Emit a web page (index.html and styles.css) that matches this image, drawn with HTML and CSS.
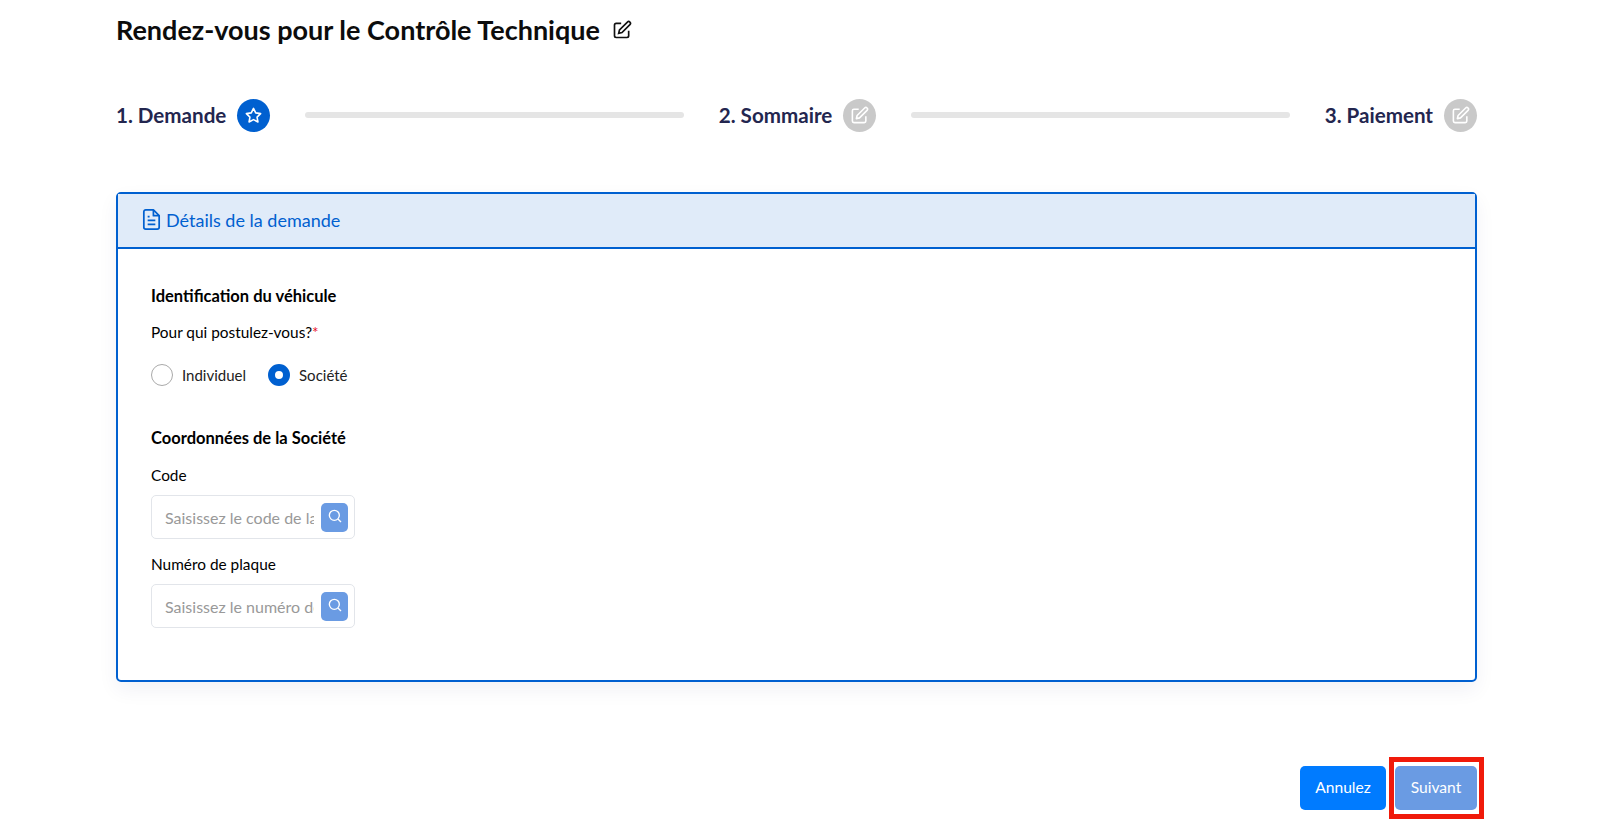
FILE: index.html
```html
<!DOCTYPE html>
<html lang="fr">
<head>
<meta charset="utf-8"/>
<title>Rendez-vous pour le Contrôle Technique</title>
<link rel="stylesheet" href="styles.css">
</head>
<body>
<div class="page">
    <div class="title">
        <h1>Rendez-vous pour le Contrôle Technique</h1>
        <svg class="title-icon" viewBox="0 0 24 24"><path d="M11 4H5a2 2 0 0 0-2 2v13a2 2 0 0 0 2 2h13a2 2 0 0 0 2-2v-6"/><path d="M18.5 2.5a2.1 2.1 0 0 1 3 3L12 15l-4 1 1-4z"/></svg>
    </div>

    <div class="steps">
        <div class="step">
            <span class="step-name">1. Demande</span>
            <span class="step-dot active"><svg viewBox="0 0 24 24"><path d="M12 3l2.8 5.7 6.2.9-4.5 4.4 1.1 6.2-5.6-3-5.6 3 1.1-6.2L3 9.6l6.2-.9z"/></svg></span>
        </div>
        <div class="step-bar"></div>
        <div class="step">
            <span class="step-name">2. Sommaire</span>
            <span class="step-dot"><svg viewBox="0 0 24 24"><path d="M11 4H5a2 2 0 0 0-2 2v13a2 2 0 0 0 2 2h13a2 2 0 0 0 2-2v-6"/><path d="M18.5 2.5a2.1 2.1 0 0 1 3 3L12 15l-4 1 1-4z"/></svg></span>
        </div>
        <div class="step-bar"></div>
        <div class="step">
            <span class="step-name">3. Paiement</span>
            <span class="step-dot"><svg viewBox="0 0 24 24"><path d="M11 4H5a2 2 0 0 0-2 2v13a2 2 0 0 0 2 2h13a2 2 0 0 0 2-2v-6"/><path d="M18.5 2.5a2.1 2.1 0 0 1 3 3L12 15l-4 1 1-4z"/></svg></span>
        </div>
    </div>

    <div class="card">
        <div class="card-head">
            <svg viewBox="0 0 24 24"><path d="M14 2H6a2 2 0 0 0-2 2v16a2 2 0 0 0 2 2h12a2 2 0 0 0 2-2V8z"/><path d="M14 2v6h6"/><path d="M8 13h8M8 17h8M8 9h2"/></svg>
            <span>Détails de la demande</span>
        </div>
        <div class="card-body">
            <h2 class="section">Identification du véhicule</h2>
            <div class="label first">Pour qui postulez-vous?<span class="req">*</span></div>
            <div class="radios">
                <div class="radio"><span class="radio-mark"></span>Individuel</div>
                <div class="radio"><span class="radio-mark on"></span>Société</div>
            </div>
            <h2 class="section second">Coordonnées de la Société</h2>
            <div class="label code">Code</div>
            <div class="field">
                <input type="text" placeholder="Saisissez le code de la société">
                <button class="field-btn"><svg viewBox="0 0 24 24"><circle cx="11" cy="11" r="7.5"/><path d="M16.5 16.5L21 21"/></svg></button>
            </div>
            <div class="label plate">Numéro de plaque</div>
            <div class="field">
                <input type="text" placeholder="Saisissez le numéro de plaque">
                <button class="field-btn"><svg viewBox="0 0 24 24"><circle cx="11" cy="11" r="7.5"/><path d="M16.5 16.5L21 21"/></svg></button>
            </div>
        </div>
    </div>

    <div class="actions">
        <button class="btn cancel">Annulez</button>
        <button class="btn next">Suivant<span class="mark"></span></button>
    </div>
</div>
</body>
</html>
```

FILE: styles.css
```css
html, body {
    margin:0;
    padding:0;
    background:#fff;
    font-family:"Lato", "Open Sans", sans-serif;
    color:#000;
}
.page {
    width:1361px;
    margin-left:116px;
    height:823px;
    overflow:visible;
}
.title {
    display:flex;
    align-items:center;
    height:59px;
}
.title h1 {
    margin:0;
    font-size:27px;
    font-weight:700;
    color:#0c0c0c;
}
.title-icon {
    width:20px;
    height:20px;
    margin-left:12px;
    fill:none;
    stroke:#111;
    stroke-width:2;
}
.steps {
    display:flex;
    align-items:center;
    height:34px;
    margin-top:39px;
}
.step {
    display:flex;
    align-items:center;
}
.step-name {
    margin-top:-1px;
    font-size:20.6px;
    font-weight:700;
    color:#23264f;
}
.step-dot {
    display:flex;
    align-items:center;
    justify-content:center;
    width:33px;
    height:33px;
    margin-left:11px;
    border-radius:50%;
    background:#c9c9c9;
}
.step-dot.active {
    background:#0060d0;
}
.step-dot svg {
    width:19px;
    height:19px;
    fill:none;
    stroke:#fff;
    stroke-width:2;
    stroke-linejoin:round;
}
.step-bar {
    flex:1;
    height:6px;
    margin:0 35px;
    border-radius:3px;
    background:#e5e5e5;
}
.card {
    margin-top:60px;
    height:490px;
    box-sizing:border-box;
    border:2px solid #0060d0;
    border-radius:5px;
    box-shadow:0 8px 20px rgba(0,40,100,0.06);
}
.card-head {
    display:flex;
    align-items:center;
    height:55px;
    box-sizing:border-box;
    padding:0 0 1px 22px;
    border-bottom:2px solid #0060d0;
    background:#e0ebf9;
    color:#0060d0;
    font-size:18px;
}
.card-head svg {
    width:23px;
    height:23px;
    margin:-2px 3px 0 0;
    fill:none;
    stroke:#0060d0;
    stroke-width:1.8;
    stroke-linejoin:round;
}
.card-body {
    padding:37px 33px 0;
}
.section {
    margin:0;
    font-size:16.5px;
    line-height:20px;
    font-weight:700;
}
.section.second {
    margin-top:42px;
}
.label {
    font-size:15.4px;
    line-height:20px;
}
.label.first {
    margin-top:16px;
}
.label.code {
    margin-top:17px;
}
.label.plate {
    margin-top:15px;
}
.req {
    color:#e8112d;
}
.radios {
    display:flex;
    gap:22px;
    margin-top:22px;
}
.radio {
    display:flex;
    align-items:center;
    font-size:15px;
    line-height:22px;
    color:#222;
}
.radio-mark {
    box-sizing:border-box;
    width:22px;
    height:22px;
    margin-right:9px;
    border:1px solid #aaa;
    border-radius:50%;
    background:#fff;
}
.radio-mark.on {
    border:7px solid #0060d0;
}
.field {
    display:flex;
    align-items:center;
    box-sizing:border-box;
    width:204px;
    height:44px;
    margin-top:10px;
    padding:0 6px 0 13px;
    border:1px solid #e2e5ea;
    border-radius:5px;
}
.field input {
    flex:1;
    min-width:0;
    margin-right:7px;
    padding:0;
    border:0;
    outline:0;
    font-family:inherit;
    font-size:16px;
    color:#222;
}
.field input::placeholder {
    color:#999;
    opacity:1;
}
.field-btn {
    display:flex;
    align-items:center;
    justify-content:center;
    flex:none;
    width:27px;
    height:29px;
    padding:0 0 2px;
    border:0;
    border-radius:5px;
    background:#6a9be3;
}
.field-btn svg {
    width:16px;
    height:16px;
    fill:none;
    stroke:#fff;
    stroke-width:2;
}
.actions {
    display:flex;
    justify-content:flex-end;
    gap:9px;
    margin-top:84px;
}
.btn {
    position:relative;
    height:44px;
    padding:0 0 2px;
    border:0;
    border-radius:5px;
    font-family:inherit;
    font-size:15.6px;
    color:#fff;
}
.cancel {
    width:86px;
    background:#007bff;
}
.next {
    width:82px;
    background:#6a9be3;
}
/* red highlight drawn over the screenshot */
.mark {
    position:absolute;
    top:-9px;
    right:-7px;
    bottom:-9px;
    left:-6px;
    border:5px solid #f01a0a;
}
```
